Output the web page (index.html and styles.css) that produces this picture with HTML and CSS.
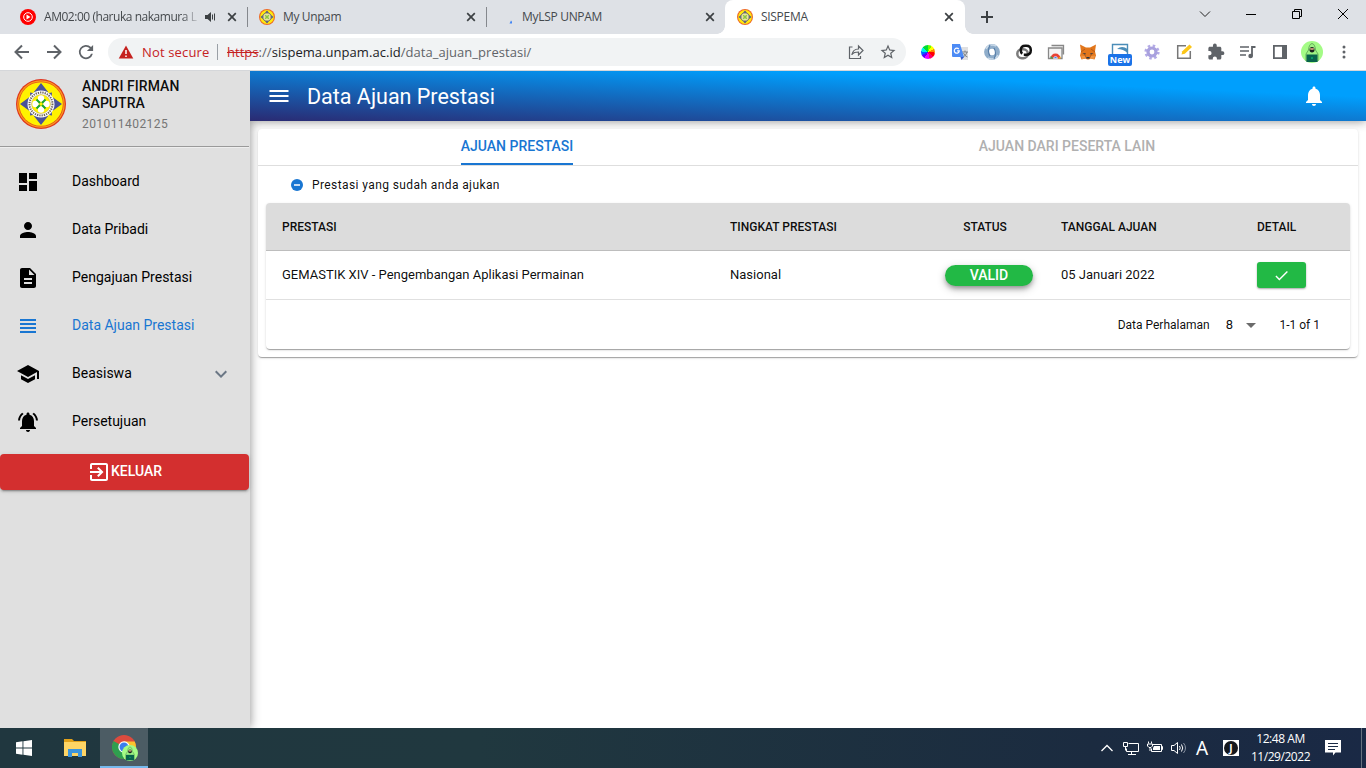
FILE: index.html
```html
<!DOCTYPE html>
<html lang="id">
<head>
<meta charset="utf-8">
<title>SISPEMA</title>
<link rel="stylesheet" href="styles.css">
</head>
<body>
<svg class="defs" width="0" height="0">
  <symbol id="logo" viewBox="0 0 50 50">
    <circle cx="25" cy="25" r="25" fill="#e0351f"/>
    <circle cx="25" cy="25" r="23.800" fill="#f9a01b"/>
    <circle cx="25" cy="25" r="22.600" fill="#e8501c"/>
    <circle cx="25" cy="25" r="21.800" fill="#fff200"/>
    <path d="M25 4l7.500 9.500h-15zM25 46l7.500-9.500h-15zM4 25l9.500-7v14zM46 25l-9.500-7v14zM14 13.500l6 1-5.500 5.500zM36 13.500l-.5 6.500-5.500-5.500zM14 36.500l.5-6.500 5.500 5.500zM36 36.500l-6-1 5.500-5.500z" fill="#4a5299"/>
    <circle cx="25" cy="25" r="13.500" fill="#fff"/>
    <circle cx="25" cy="25" r="11.500" fill="none" stroke="#6f6558" stroke-width="2" stroke-dasharray="1.300 1"/>
    <circle cx="25" cy="25" r="9.500" fill="#fff200" stroke="#b9a55a" stroke-width=".5"/>
    <circle cx="25" cy="19.500" r="3.200" fill="#fff"/><circle cx="25" cy="30.500" r="3.200" fill="#fff"/><circle cx="19.500" cy="25" r="3.200" fill="#fff"/><circle cx="30.500" cy="25" r="3.200" fill="#fff"/>
    <path d="M20.500 20.500l3.500 3.500M29.500 20.500L26 24M20.500 29.500L24 26M29.500 29.500L26 26" fill="none" stroke="#18a335" stroke-width="2"/>
  </symbol>
  <symbol id="minilogo" viewBox="0 0 16 16">
    <circle cx="8" cy="8" r="8" fill="#ee6a24"/><circle cx="8" cy="8" r="6.900" fill="#ffe90c"/>
    <path d="M8 1.500L10 4H6zM8 14.500L10 12H6zM1.500 8L4 6v4zM14.500 8L12 6v4z" fill="#4d548c"/>
    <circle cx="8" cy="8" r="4.100" fill="#e9e4a0" stroke="#77776f" stroke-width="1"/>
    <path d="M6.200 6.200l3.600 3.600M9.800 6.200L6.200 9.800" stroke="#8cc63f" stroke-width="1.500"/>
  </symbol>
  <symbol id="x" viewBox="0 0 16 16"><path d="M4.200 4.200l7.600 7.600M11.800 4.200l-7.600 7.600" stroke="#3c4043" stroke-width="1.700"/></symbol>
  <symbol id="hacker" viewBox="0 0 22 22">
    <circle cx="11" cy="11" r="11" fill="#a4fb86"/>
    <path d="M7.500 9Q8 3 11 2.500 14 3 14.500 9L17 13v7H5v-7z" fill="#9df283" stroke="#4f8f4b" stroke-width=".7"/>
    <ellipse cx="11" cy="8.800" rx="2.500" ry="2.700" fill="#18211c"/><path d="M9 7.300h4l-.4 1.500H9.400z" fill="#e9b48e"/>
    <path d="M5.500 13.500h11V21h-11z" fill="#08634c"/><circle cx="11" cy="17" r="1" fill="#0aa870"/>
  </symbol>
</svg>

<header class="tabstrip">
  <div class="tab">
    <svg class="fav" viewBox="0 0 16 16"><circle cx="8" cy="8" r="8" fill="#f00"/><circle cx="8" cy="8" r="4.300" fill="none" stroke="#fff"/><path d="M6.500 5.500L10.500 8l-4 2.500z" fill="#fff"/></svg>
    <span class="title t-music">AM02:00 (haruka nakamura L</span>
    <svg class="speaker" viewBox="0 0 12 12"><path d="M1 4h2.500L7 1v10L3.500 8H1z" fill="#3c4043"/><path d="M8.500 3.500v5M10.500 2.500v7" stroke="#3c4043"/></svg>
    <svg class="close" viewBox="0 0 16 16"><use href="#x"/></svg>
  </div>
  <div class="tab">
    <svg class="fav"><use href="#minilogo"/></svg>
    <span class="title"><span class="t-unpam">My Unpam</span></span>
    <svg class="close"><use href="#x"/></svg>
  </div>
  <div class="tab last">
    <svg class="fav" viewBox="0 0 16 16"><path d="M11.500 14.500h2.500v-2L13 11.500z" fill="#4285f4"/></svg>
    <span class="title"><span class="t-lsp">MyLSP UNPAM</span></span>
    <svg class="close"><use href="#x"/></svg>
  </div>
  <div class="tab active">
    <svg class="fav"><use href="#minilogo"/></svg>
    <span class="title"><span class="t-sis">SISPEMA</span></span>
    <svg class="close"><use href="#x"/></svg>
  </div>
  <svg class="plus" viewBox="0 0 44 34"><path d="M16 17h12M22 11v12" stroke="#3c4043" stroke-width="2"/></svg>
  <div class="winctl">
    <svg viewBox="0 0 46 28"><path d="M18 11.500l5 5 5-5" fill="none" stroke="#222"/></svg>
    <svg viewBox="0 0 46 28"><path d="M18 14.500h10" stroke="#000"/></svg>
    <svg viewBox="0 0 46 28"><path d="M18.500 11.500h7v7h-7zM20.500 11.500v-2h7v7h-2" fill="none" stroke="#000"/></svg>
    <svg viewBox="0 0 46 28"><path d="M18 9l10 10M28 9L18 19" stroke="#000"/></svg>
  </div>
</header>

<div class="toolbar">
  <div class="nav">
    <svg viewBox="0 0 32 32"><path d="M23 16H10M16 9.500L9.500 16l6.500 6.500" fill="none" stroke="#5f6368" stroke-width="2"/></svg>
    <svg viewBox="0 0 32 32"><path d="M9 16h13M16 9.500l6.500 6.500-6.500 6.500" fill="none" stroke="#5f6368" stroke-width="2"/></svg>
    <svg viewBox="-6 -6 36 36"><path fill="#5f6368" d="M17.650 6.350A8 8 0 1 0 19.730 14h-2.080A6 6 0 1 1 16.220 7.780L13 11h7V4z"/></svg>
  </div>
  <div class="omnibox">
    <svg class="warn" viewBox="0 0 16 14"><path d="M8 0.500L15.300 13.500H.7z" fill="#c5221f"/><path d="M8 5v4M8 10.500v1.500" stroke="#fff" stroke-width="1.500"/></svg>
    <span class="notsecure">Not secure</span>
    <span class="bar"></span>
    <span class="url"><s>https</s><i>://</i>sispema.unpam.ac.id<i>/data_ajuan_prestasi/</i></span>
    <svg class="slot share" viewBox="0 0 32 32"><path d="M12.500 11H9.500v11.500h11V20M12 19c.5-4 3-6 6.500-6v-3l4.500 4.500-4.500 4.500v-3c-3 0-5 .5-6.500 2z" fill="none" stroke="#5f6368" stroke-width="1.200"/></svg>
    <svg class="star" viewBox="0 0 24 24"><path fill="#5f6368" d="M22 9.240l-7.190-.62L12 2 9.190 8.630 2 9.240l5.460 4.730L5.820 21 12 17.270 18.180 21l-1.630-7.030L22 9.240zM12 15.400l-3.760 2.270 1-4.280-3.320-2.880 4.380-.38L12 6.100l1.710 4.040 4.380.38-3.320 2.880 1 4.280L12 15.400z"/></svg>
  </div>
  <div class="exts">
    <div class="slot"><span class="wheel"></span></div>
    <svg class="slot" viewBox="0 0 32 32"><path d="M15 11h9v13h-7z" fill="#dfe0e2"/><path d="M18 16h6M21 14.500V16M23 16q-1 4-4 5M19.500 17q1 3 4 4" stroke="#7d8186" fill="none"/><path d="M8 8h8l4 13H9q-1 0-1-1z" fill="#4c8bf5"/><path d="M16.500 21h3.500l-2.500 3z" fill="#3157c8"/><path d="M14.800 13.200a2.500 2.500 0 1 0 .5 1.600h-2.200" fill="none" stroke="#fff" stroke-width="1.200"/></svg>
    <svg class="slot" viewBox="0 0 32 32"><circle cx="16" cy="16" r="5.600" fill="none" stroke="#8fadca" stroke-width="4.600"/><path d="M10 13a7 7 0 0 1 10-3M22 19a7 7 0 0 1-10 3" fill="none" stroke="#c9d9e8" stroke-width="1.600"/><path d="M14 9q-3 6 0 11M18 23q3-6 0-11" fill="none" stroke="#587fa9" stroke-width="1.200"/></svg>
    <svg class="slot" viewBox="0 0 32 32" fill="none" stroke-width="2.500"><rect x="9.300" y="13.300" width="10.500" height="9" rx="4.500" stroke="#7c7c7c"/><path d="M14.200 17.700Q12.800 16.500 12.800 14.200 12.800 9.700 17.300 9.700h1q4.500 0 4.500 4.500t-4.500 4.500h-2.500" stroke="#111"/></svg>
    <svg class="slot" viewBox="0 0 32 32"><path d="M11.500 9.500h12v9M10 12h12v10.500H8.500V12z" fill="#f5f5f5" stroke="#888" stroke-width="1.300"/><path d="M10.500 22.500a5 5 0 0 1 10 0z" fill="#e84335"/><path d="M10.500 22.500v-2.500l3.500 2.500z" fill="#34a853"/><path d="M20.500 22.500v-2l-3 2z" fill="#fbbc05"/><path d="M13.500 22.500a2 2 0 0 1 4 0z" fill="#4285f4" stroke="#fff" stroke-width=".6"/></svg>
    <svg class="slot" viewBox="0 0 32 32"><path d="M8 8.500l6 3h4l6-3-1 7 1 4-1.500 4-4-1-1.500 1h-2l-1.500-1-4 1L8 19.500l1-4z" fill="#e2761b"/><path d="M9 16l4-3M23 16l-4-3M13 19l1 3h4l1-3" stroke="#b85a16" fill="none"/><path d="M10.500 17l3.500.5-1 1.300zM21.500 17l-3.500.5 1 1.300z" fill="#263447"/><path d="M14.500 21h3v1.500h-3z" fill="#233447"/><path d="M9 19.500l4 .5 1 2.500-4 .5zM23 19.500l-4 .5-1 2.500 4 .5z" fill="#ef9340"/></svg>
    <div class="slot newext"><svg viewBox="0 0 32 32"><path d="M8.500 20V8.500h15V20" fill="#fff" stroke="#4b8db8" stroke-width="1.400"/><path d="M13 13q5-4 10.500 0v4q-4-4-10.500-4z" fill="#4b8db8"/></svg><span class="badge">New</span></div>
    <svg class="slot" viewBox="0 0 32 32"><circle cx="16" cy="16" r="6.200" fill="none" stroke="#b4abe6" stroke-width="2.800" stroke-dasharray="2.430 2.430"/><circle cx="16" cy="16" r="4" fill="none" stroke="#a9a1de" stroke-width="3.200"/></svg>
    <svg class="slot" viewBox="0 0 32 32"><path d="M18 9.700H9.700v12.600h12.600V15" fill="none" stroke="#777" stroke-width="1.500"/><path d="M13.500 18.500l.8-3.200 7.200-6.800 2.500 2.500-7.200 6.800z" fill="#fbc618"/></svg>
    <svg class="slot" viewBox="-9 -9 42 42"><path fill="#5f6368" d="M20.500 11H19V7c0-1.100-.9-2-2-2h-4V3.500a2.500 2.500 0 0 0-5 0V5H4c-1.100 0-2 .9-2 2v3.800h1.500a2.700 2.700 0 0 1 0 5.400H2V20c0 1.100.9 2 2 2h3.800v-1.500a2.700 2.700 0 0 1 5.400 0V22H17c1.100 0 2-.9 2-2v-4h1.500a2.500 2.500 0 0 0 0-5z"/></svg>
    <svg class="slot" viewBox="0 0 32 32"><path d="M8 11h9M8 15h9M8 19h6" stroke="#5f6368" stroke-width="1.600"/><path d="M20 20.500V11h3.500" fill="none" stroke="#5f6368" stroke-width="1.800"/><circle cx="18.600" cy="20" r="2.300" fill="#5f6368"/></svg>
    <svg class="slot" viewBox="0 0 32 32"><path d="M9 9h14v14H9zM10.800 10.800v10.400H18V10.800z" fill="#5f6368" fill-rule="evenodd"/></svg>
    <div class="slot"><svg class="avatar"><use href="#hacker"/></svg></div>
    <svg class="slot" viewBox="0 0 32 32" fill="#5f6368"><circle cx="16" cy="11" r="1.500"/><circle cx="16" cy="16" r="1.500"/><circle cx="16" cy="21" r="1.500"/></svg>
  </div>
</div>

<div class="app">
  <aside class="sidebar">
    <div class="profile">
      <svg class="crest"><use href="#logo"/></svg>
      <div class="who"><div class="name">ANDRI FIRMAN SAPUTRA</div><div class="nim">201011402125</div></div>
    </div>
    <nav class="menu">
      <a class="item"><svg viewBox="0 0 24 24"><path d="M3 13h8V3H3v10zm0 8h8v-6H3v6zm10 0h8V11h-8v10zm0-18v6h8V3h-8z"/></svg><span>Dashboard</span></a>
      <a class="item"><svg viewBox="0 0 24 24"><path d="M12 12c2.210 0 4-1.790 4-4s-1.790-4-4-4-4 1.790-4 4 1.790 4 4 4zm0 2c-2.670 0-8 1.340-8 4v2h16v-2c0-2.660-5.330-4-8-4z"/></svg><span>Data Pribadi</span></a>
      <a class="item"><svg viewBox="0 0 24 24"><path d="M14 2H6c-1.100 0-1.990.9-1.990 2L4 20c0 1.100.89 2 1.990 2H18c1.100 0 2-.9 2-2V8l-6-6zm2 16H8v-2h8v2zm0-4H8v-2h8v2zm-3-5V3.500L18.500 9H13z"/></svg><span>Pengajuan Prestasi</span></a>
      <a class="item current"><svg viewBox="0 0 24 24"><path d="M4 15h16v-2H4v2zm0 4h16v-2H4v2zm0-8h16V9H4v2zm0-6v2h16V5H4z"/></svg><span>Data Ajuan Prestasi</span></a>
      <a class="item"><svg viewBox="0 0 24 24"><path d="M5 13.180v4L12 21l7-3.820v-4L12 17l-7-3.820zM12 3L1 9l11 6 9-4.910V17h2V9L12 3z"/></svg><span>Beasiswa</span><svg class="chev" viewBox="0 0 24 24"><path d="M7.410 8.590L12 13.170l4.590-4.580L18 10l-6 6-6-6z"/></svg></a>
      <a class="item"><svg viewBox="0 0 24 24"><path d="M7.580 4.080L6.150 2.650C3.750 4.480 2.170 7.300 2.030 10.500h2c.15-2.650 1.510-4.970 3.550-6.420zm12.390 6.420h2c-.15-3.200-1.730-6.020-4.120-7.850l-1.420 1.430c2.020 1.450 3.390 3.770 3.540 6.420zM18 11c0-3.070-1.640-5.640-4.500-6.320V4c0-.83-.67-1.500-1.500-1.500s-1.500.67-1.500 1.500v.68C7.630 5.360 6 7.920 6 11v5l-2 2v1h16v-1l-2-2v-5zm-6 11c.14 0 .27-.01.4-.04.65-.14 1.180-.58 1.440-1.180.1-.24.15-.5.15-.78h-4c.01 1.100.9 2 2.010 2z"/></svg><span>Persetujuan</span></a>
    </nav>
    <button class="logout"><svg viewBox="0 0 24 24"><path d="M10.090 15.590L11.500 17l5-5-5-5-1.410 1.410L12.670 11H3v2h9.670l-2.580 2.590zM19 3H5c-1.110 0-2 .9-2 2v4h2V5h14v14H5v-4H3v4c0 1.100.89 2 2 2h14c1.100 0 2-.9 2-2V5c0-1.100-.9-2-2-2z"/></svg><span>KELUAR</span></button>
  </aside>
  <main class="main">
    <div class="appbar">
      <svg viewBox="0 0 24 24"><path d="M2.500 18h19v-2h-19v2zm0-5h19v-2h-19v2zm0-7v2h19V6h-19z"/></svg>
      <h1>Data Ajuan Prestasi</h1>
      <svg class="bell" viewBox="0 0 24 24"><path d="M12 22c1.100 0 2-.9 2-2h-4c0 1.100.89 2 2 2zm6-6v-5c0-3.070-1.640-5.640-4.500-6.320V4c0-.83-.67-1.500-1.500-1.500s-1.500.67-1.500 1.500v.68C7.630 5.360 6 7.920 6 11v5l-2 2v1h16v-1l-2-2z"/></svg>
    </div>
    <section class="card">
      <div class="tabs"><div class="tabcell"><span class="on">AJUAN PRESTASI</span></div><div class="tabcell"><span>AJUAN DARI PESERTA LAIN</span></div></div>
      <div class="note"><svg viewBox="0 0 12 12"><circle cx="6" cy="6" r="6" fill="#1976d2"/><path d="M3 6h6" stroke="#fff" stroke-width="1.500"/></svg><span>Prestasi yang sudah anda ajukan</span></div>
      <div class="table">
        <div class="row head"><div>PRESTASI</div><div>TINGKAT PRESTASI</div><div class="status">STATUS</div><div>TANGGAL AJUAN</div><div>DETAIL</div></div>
        <div class="row body"><div class="txt">GEMASTIK XIV - Pengembangan Aplikasi Permainan</div><div class="txt">Nasional</div><div><span class="pill">VALID</span></div><div class="txt">05 Januari 2022</div><div><button class="ok"><svg viewBox="0 0 24 24"><path d="M9 16.170L4.830 12l-1.420 1.410L9 19 21 7l-1.410-1.410z"/></svg></button></div></div>
        <div class="pager"><span class="per">Data Perhalaman</span><span class="eight">8</span><svg viewBox="0 0 24 24"><path d="M7 10l5 5 5-5z"/></svg><span class="range">1-1 of 1</span></div>
      </div>
    </section>
  </main>
</div>

<footer class="taskbar">
  <div class="task"><svg class="win" viewBox="0 0 16 16"><path d="M0 2.200L6.500 1.300V7.500H0zM7.400 1.200L16 0v7.500H7.400zM0 8.500h6.500v6.200L0 13.800zM7.400 8.500H16V16l-8.600-1.200z" fill="#fff"/></svg></div>
  <div class="task files"><svg viewBox="0 0 22 18"><path d="M0 0h8l2 2h12v15H0z" fill="#e3a21a"/><path d="M0 3h22v14H0z" fill="#ffd565"/><path d="M4 10h14v8h-4v-4H8v4H4z" fill="#3d95dc"/></svg></div>
  <div class="task open"><svg class="chrome" viewBox="0 0 27 27"><circle cx="12" cy="12" r="12" fill="#dd4b3e"/><path d="M12 12L1.600 6A12 12 0 0 0 12 24z" fill="#2f9e4f"/><path d="M12 12V6.500h10.700A12 12 0 0 1 12 24z" fill="#fbc42e"/><circle cx="12" cy="12" r="5.700" fill="#fff"/><circle cx="12" cy="12" r="4.500" fill="#3b7ded"/><svg x="10" y="10" width="16" height="16"><use href="#hacker"/></svg></svg></div>
  <div class="tray">
    <svg viewBox="0 0 24 24"><path d="M6.500 15l5.500-5.500 5.500 5.500" fill="none" stroke="#fff" stroke-width="1.300"/></svg>
    <svg viewBox="0 0 24 24" fill="none" stroke="#fff"><path d="M9.500 7.500h10v8h-12v-3M12.500 15.500v3M9 18.500h8M4.500 6.500h4v4h-4zM6.500 10.500v4"/></svg>
    <svg viewBox="0 0 24 24"><path d="M9.500 8.500h9v7h-10v-3M18.500 10.500h1v3h-1" fill="none" stroke="#fff"/><path d="M11 10h6v4h-7v-2z" fill="#fff"/><path d="M5.500 5.500v2M8.500 5.500v2M4.500 8h5v2l-1.500 1.500H6L4.500 10zM7 11v4" fill="none" stroke="#fff"/></svg>
    <svg viewBox="0 0 24 24" fill="none" stroke="#fff"><path d="M4.500 9.500H7L10.500 6.500v11L7 14.500H4.500zM12.500 10q1.500 2 0 4M14.500 8.500q2.500 3.500 0 7"/><path d="M16.500 7q4 5 0 10" stroke="#8a94a3"/></svg>
    <span class="ime">A</span>
    <span class="lang"><b>J</b></span>
    <div class="clock"><span>12:48 AM</span><span class="d">11/29/2022</span></div>
    <svg class="msg" viewBox="0 0 16 16"><path d="M0 0h16v12.500h-5.500L8 15.500V12.500H0z" fill="#fff"/><path d="M3 3.500h10M3 6.500h10M3 9.500h7" stroke="#1b2b45"/></svg>
    <span class="peek"></span>
  </div>
</footer>
</body>
</html>
```
FILE: styles.css
```css
* { box-sizing: border-box; }
body { margin: 0; width: 1366px; height: 768px; overflow: hidden; display: flex; flex-direction: column; background: #fff; font-family: Roboto, sans-serif; color: rgba(0,0,0,.95); }
svg { display: block; flex: none; }
.defs { position: absolute; }

.tabstrip { height: 34px; flex: none; display: flex; background: #dee1e6; padding-left: 8px; font: 12px "Open Sans", sans-serif; color: #45494d; }
.tab { width: 239px; height: 34px; display: flex; align-items: center; padding: 0 7px 0 12px; position: relative; }
.tab::after { content: ""; position: absolute; right: -1px; top: 7px; width: 1px; height: 20px; background: #85888d; }
.tab.last { border-radius: 0 0 8px 0; }
.tab.last::after, .tab.active::after { display: none; }
.tab.active { width: 240px; background: #fff; border-radius: 8px 8px 0 0; padding-right: 8px; }
.tab.active::before { content: ""; position: absolute; left: -8px; right: -8px; bottom: 0; height: 8px; background: radial-gradient(circle at 0 0, transparent 7.500px, #fff 8px) left / 8px 8px no-repeat, radial-gradient(circle at 8px 0, transparent 7.500px, #fff 8px) right / 8px 8px no-repeat; }
.fav { width: 16px; height: 16px; margin-right: 8px; }
.title { flex: 1; white-space: nowrap; line-height: 18px; }
.t-music { flex: none; width: 154px; margin-right: 6px; letter-spacing: -.46px; -webkit-mask-image: linear-gradient(90deg, #000 138px, transparent 156px); mask-image: linear-gradient(90deg, #000 138px, transparent 156px); }
.t-unpam { letter-spacing: -.38px; }
.t-lsp { letter-spacing: -.3px; }
.t-sis { letter-spacing: -.3px; }
.speaker { width: 12px; height: 12px; margin-right: 8px; }
.close { width: 16px; height: 16px; }
.plus { width: 44px; height: 34px; }
.winctl { margin-left: auto; display: flex; }
.winctl svg { width: 46px; height: 28px; }

.toolbar { height: 37px; flex: none; display: flex; align-items: center; padding-left: 6px; background: #fff; border-bottom: 1px solid #d5d7da; }
.nav { display: flex; width: 102px; }
.nav svg { width: 32px; height: 32px; }
.omnibox { width: 798px; height: 28px; border-radius: 14px; background: #f1f3f4; display: flex; align-items: center; padding-left: 10px; font: 14px "Open Sans", sans-serif; color: #202124; }
.warn { width: 16px; height: 14px; }
.notsecure { color: #c5221f; margin-left: 8px; width: 75px; font-size: 13px; letter-spacing: .15px; white-space: nowrap; }
.bar { width: 1px; height: 16px; background: #9aa0a6; margin-right: 9px; }
.url { flex: 1; font-size: 13px; letter-spacing: .04px; white-space: nowrap; }
.url s { color: #c5221f; }
.url i { font-style: normal; color: #5f6368; }
.star { width: 18px; height: 18px; margin-right: 9px; margin-left: 7px; }
.exts { display: flex; margin-left: 6px; }
.slot { width: 32px; height: 32px; display: flex; align-items: center; justify-content: center; }
.wheel { width: 14px; height: 14px; border-radius: 50%; background: conic-gradient(#6f0 0 30deg, #ff0 30deg 65deg, #f80 65deg 95deg, #f00 95deg 130deg, #f06 130deg 165deg, #e0f 165deg 210deg, #50f 210deg 245deg, #06f 245deg 275deg, #0ee 275deg 310deg, #0d3 310deg); }
.newext { position: relative; }
.badge { position: absolute; left: 4px; top: 18px; width: 24px; height: 12px; border-radius: 2px; background: #1a73e8; color: #fff; font: 700 9px/12px "Open Sans", sans-serif; text-align: center; }
.avatar { width: 22px; height: 22px; }

.app { display: flex; height: 657px; flex: none; }
.sidebar { width: 250px; flex: none; background: #e0e0e0; position: relative; z-index: 1; box-shadow: 0 0 10px rgba(0,0,0,.45); clip-path: inset(0 -16px 0 0); }
.profile { height: 76px; display: flex; padding: 8px 0 0 16px; margin-right: 1px; border-bottom: 1px solid #9a9a9a; box-shadow: 0 1px #eee; }
.crest { width: 50px; height: 50px; margin-right: 16px; }
.name { width: 130px; font-weight: 500; font-size: 14px; line-height: 17px; letter-spacing: .06px; margin-top: -1px; }
.nim { font-size: 12px; line-height: 16px; letter-spacing: .43px; color: #757575; margin-top: 4px; }
.menu { padding-top: 10px; }
.item { height: 48px; display: flex; align-items: center; padding: 0 16px; font-size: 14px; color: #000; }
.item svg { width: 24px; height: 24px; margin-right: 32px; position: relative; top: 1px; }
.item.current { color: #1976d2; }
.item svg path { fill: currentColor; }
.item .chev { margin: 0 1px 0 auto; color: #6b7785; }
.logout { border: 0; width: 249px; height: 36px; margin-top: 9px; background: #d32f2f; color: #fff; border-radius: 4px; box-shadow: 0 3px 1px -2px rgba(0,0,0,.2), 0 2px 2px rgba(0,0,0,.14), 0 1px 5px rgba(0,0,0,.12); display: flex; align-items: center; justify-content: center; font: 500 14px Roboto, sans-serif; padding: 0 0 2px; }
.logout svg { width: 24px; height: 24px; fill: #fff; position: relative; top: 1px; }
.main { flex: 1; }
.appbar { position: relative; z-index: 2; height: 50px; display: flex; align-items: center; padding: 0 40px 0 17px; background: linear-gradient(to right top, #2a2a72 0%, #009ffd 74%); box-shadow: 0 0 10px rgba(0,0,0,.45); clip-path: inset(0 0 -16px 0); }
.appbar svg { width: 24px; height: 24px; fill: #fff; }
.appbar h1 { margin: 0 0 0 16px; color: #fff; font-size: 21.500px; font-weight: 400; }
.appbar .bell { margin-left: auto; }
.card { position: relative; z-index: 3; margin: 8px 8px 0; width: 1100px; height: 228px; padding: 0 8px; border-radius: 4px; background: #fff; box-shadow: 0 2px 1px -1px rgba(0,0,0,.2), 0 1px 1px rgba(0,0,0,.14), 0 1px 3px rgba(0,0,0,.12); }
.tabs { display: flex; height: 37px; margin: 0 -8px; border-bottom: 1px solid #dedede; font-weight: 500; font-size: 14px; color: #b0b0b0; }
.tabcell { flex: 1; display: flex; justify-content: center; padding-right: 32px; }
.tabcell span { height: 36px; line-height: 35px; }
.tabcell .on { color: #1976d2; border-bottom: 2px solid #1976d2; }
.note { height: 37px; display: flex; align-items: center; padding-left: 25px; font-size: 12px; letter-spacing: .4px; }
.note svg { width: 12px; height: 12px; margin-right: 9px; }
.table { height: 146px; border-radius: 4px; overflow: hidden; background: #fff; box-shadow: 0 2px 1px -1px rgba(0,0,0,.2), 0 1px 1px rgba(0,0,0,.14), 0 1px 3px rgba(0,0,0,.12); }
.row { display: grid; grid-template-columns: 448px 215px 116px 196px 109px; align-items: center; }
.row > div { padding-left: 16px; }
.head { height: 48px; background: #dcdcdc; border-bottom: 1px solid #bdbdbd; font-size: 12px; font-weight: 500; }
.head .status { padding: 0 20px 0 16px; text-align: center; }
.body { height: 49px; border-bottom: 1px solid #e0e0e0; font-size: 13px; }
.body .txt { padding-bottom: 2px; }
.pill { display: block; width: 88px; height: 21px; border-radius: 11px; background: #22b945; color: #fff; font-weight: 500; font-size: 14px; line-height: 21px; text-align: center; box-shadow: 0 3px 5px -1px rgba(0,0,0,.3), 0 3px 8px rgba(0,0,0,.25); }
.ok { display: flex; align-items: center; justify-content: center; border: 0; padding: 0; width: 49px; height: 26px; border-radius: 3px; background: #22b945; box-shadow: 0 1px 2px rgba(0,0,0,.35); }
.ok svg { width: 17px; height: 17px; fill: #fff; }
.pager { height: 49px; display: flex; align-items: center; justify-content: flex-end; padding-right: 30px; font-size: 12px; }
.eight { margin-left: 16px; font-size: 13px; }
.pager svg { width: 24px; height: 24px; fill: #6b6b6b; margin: 0 16px 0 6.500px; }

.taskbar { height: 40px; flex: none; display: flex; background: linear-gradient(90deg, #20373f 0%, #20383f 35%, #1b2b40 80%, #1a2945); color: #fff; }
.task { width: 48px; height: 40px; display: flex; align-items: center; justify-content: center; }
.win { width: 16px; height: 16px; }
.files { width: 52px; padding-left: 1px; }
.files svg { width: 22px; height: 18px; }
.open { background: #4c5c64; border-bottom: 2px solid #76b9ed; }
.chrome { width: 27px; height: 27px; margin: 3px 0 0 3px; }
.tray { margin-left: auto; display: flex; align-items: center; font-family: "Open Sans", sans-serif; }
.tray svg { width: 24px; height: 24px; }
.ime { width: 22px; text-align: center; font: 19px/40px "Noto Sans", sans-serif; }
.lang { width: 16px; height: 16px; margin: 0 0 0 10px; background: #fff; padding: 1px; }
.lang b { display: block; width: 14px; height: 14px; border-radius: 7px; background: #15181e; font: 700 10px/14px "Open Sans", sans-serif; text-align: center; }
.clock { width: 84px; display: flex; flex-direction: column; align-items: center; font-size: 12px; line-height: 18px; letter-spacing: -.45px; padding: 0 1px 1px 0; }
.tray .msg { width: 16px; height: 16px; margin: 0 20px 0 2px; }
.peek { width: 1px; height: 40px; background: #66717f; margin-right: 4px; }
```
